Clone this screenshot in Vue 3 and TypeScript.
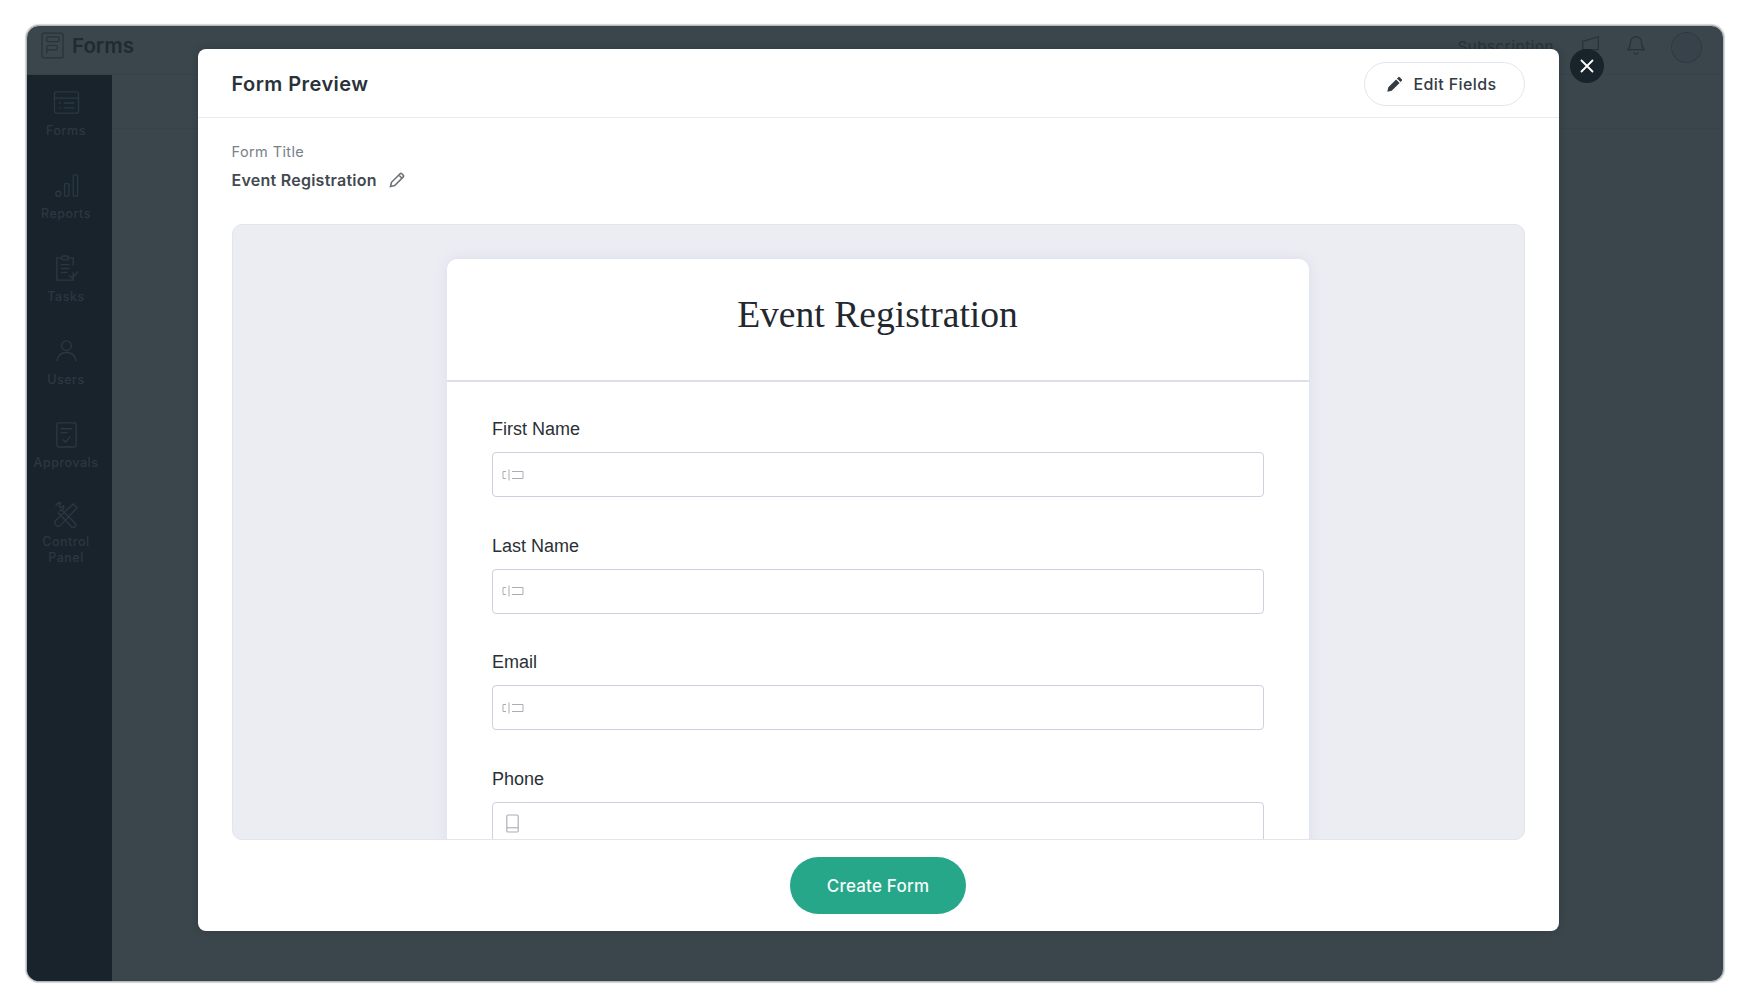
<script setup lang="ts">
interface NavItem { label: string; icon: string }
const nav: NavItem[] = [
  { label: 'Forms', icon: 'forms' },
  { label: 'Reports', icon: 'reports' },
  { label: 'Tasks', icon: 'tasks' },
  { label: 'Users', icon: 'users' },
  { label: 'Approvals', icon: 'approvals' },
  { label: 'Control Panel', icon: 'control' }
]
const fields = [
  { label: 'First Name', icon: 'text' },
  { label: 'Last Name', icon: 'text' },
  { label: 'Email', icon: 'text' },
  { label: 'Phone', icon: 'phone' }
]
</script>

<template>
  <div class="page">
    <div class="frame">
      <header class="topbar">
        <div class="brand">
          <svg class="logo" viewBox="0 0 24 28" fill="none" stroke="currentColor" stroke-width="1.3">
            <rect x="1" y="1" width="22" height="26" rx="2" />
            <rect x="6" y="5" width="13" height="5" rx="1.5" />
            <path d="M6 22v-6.500a1.500 1.500 0 0 1 1.500-1.500H15a1.500 1.500 0 0 1 0 4.500H6" />
          </svg>
          <span class="brand-name">Forms</span>
        </div>
        <div class="top-right">
          <span class="sub">Subscription</span>
          <svg class="top-icon" viewBox="0 0 24 24" fill="none" stroke="currentColor" stroke-width="1.4">
            <path d="M3 8l17-5v14H3z" />
          </svg>
          <svg class="top-icon bell" viewBox="0 0 24 24" fill="none" stroke="currentColor" stroke-width="1.4">
            <path d="M12 3a6 6 0 0 0-6 6c0 5-2 7-3 8h18c-1-1-3-3-3-8a6 6 0 0 0-6-6zM10 20a2 2 0 0 0 4 0" />
          </svg>
          <span class="avatar"></span>
        </div>
      </header>
      <div class="shell">
        <aside class="sidebar">
          <div v-for="item in nav" :key="item.label" class="nav-item">
            <svg class="nav-icon" viewBox="0 0 28 28" fill="none" stroke="currentColor" stroke-width="1.4">
              <g v-if="item.icon === 'forms'">
                <rect x="1.500" y="3" width="25" height="22" rx="2" />
                <path d="M1.500 9.500h25M6 14.500h2M11 14.500h11M6 19.500h2M11 19.500h11" />
              </g>
              <g v-else-if="item.icon === 'reports'">
                <rect x="3" y="20" width="5" height="5" rx="2" />
                <rect x="12" y="12" width="4.500" height="13" rx="1" />
                <rect x="21" y="3" width="4.500" height="22" rx="1" />
              </g>
              <g v-else-if="item.icon === 'tasks'">
                <path d="M9 3H4v23h17v-8M16 3h5v8" />
                <rect x="9" y="1" width="7" height="4" rx="2" />
                <path d="M8 10h9M8 14h9M8 18h7M17 21l3 3 6-7" />
              </g>
              <g v-else-if="item.icon === 'users'">
                <circle cx="14" cy="8" r="5" />
                <path d="M4 24c1-6 5-9 10-9s9 3 10 9" />
              </g>
              <g v-else-if="item.icon === 'approvals'">
                <rect x="4" y="2" width="20" height="25" rx="1.500" />
                <path d="M8 8h12M8 12h7M10 19l3 3 5-6" />
              </g>
              <g v-else>
                <path d="M8 8l15 15a2.500 2.500 0 0 1-4 3.500L5 12" />
                <path d="M21 3l4 4L8 25a3.500 3.500 0 0 1-5-5z" />
                <path d="M3 5a4 4 0 0 1 5-3L6 5l2 2 3-2a4 4 0 0 1-5 5" />
              </g>
            </svg>
            <span class="nav-label">{{ item.label }}</span>
          </div>
        </aside>
        <main class="content">
          <div class="toolbar"></div>
        </main>
      </div>

      <section class="modal">
        <div class="modal-head">
          <h2 class="modal-title">Form Preview</h2>
          <button class="edit-btn" type="button">
            <svg class="pencil-solid" viewBox="0 0 16 16" fill="currentColor">
              <path d="M11.300 1.200a1 1 0 0 1 1.400 0l2.100 2.100a1 1 0 0 1 0 1.400l-1.300 1.300-3.500-3.500zM9.100 3.400l3.500 3.500-7.900 7.900-4.400 1 1-4.500z" />
            </svg>
            <span>Edit Fields</span>
          </button>
        </div>
        <div class="title-block">
          <div class="title-label">Form Title</div>
          <div class="title-value">
            <span>Event Registration</span>
            <svg class="pencil-line" viewBox="0 0 16 16" fill="none" stroke="currentColor" stroke-width="1.600">
              <path d="M1.500 14.500l1-4.200 8.600-8.600a1.200 1.200 0 0 1 1.700 0l1.500 1.500a1.200 1.200 0 0 1 0 1.700l-8.600 8.600zM9.800 3l3.200 3.200" />
            </svg>
          </div>
        </div>
        <div class="canvas">
          <div class="card">
            <div class="card-head">Event Registration</div>
            <div class="card-body">
              <div v-for="f in fields" :key="f.label" class="field">
                <div class="field-label">{{ f.label }}</div>
                <div class="input">
                  <svg v-if="f.icon === 'text'" class="input-icon" viewBox="0 0 22 12" fill="none" stroke="currentColor" stroke-width="1">
                    <path d="M4 2.500H1v7h3M7 .5v11M10 2.500h11v7H10" />
                  </svg>
                  <svg v-else class="input-icon phone" viewBox="0 0 14 20" fill="none" stroke="currentColor" stroke-width="1.200">
                    <rect x="1" y="1" width="12" height="18" rx="1.500" />
                    <path d="M1 14.500h12" />
                  </svg>
                </div>
              </div>
            </div>
          </div>
        </div>
        <div class="modal-foot">
          <button class="create-btn" type="button">Create Form</button>
        </div>
      </section>

      <button class="close-btn" type="button" aria-label="Close">
        <svg viewBox="0 0 14 14" fill="none" stroke="#fff" stroke-width="1.800" stroke-linecap="round">
          <path d="M1.500 1.500l11 11M12.500 1.500l-11 11" />
        </svg>
      </button>
    </div>
  </div>
</template>

<style>
html, body { margin: 0; background: #fff; }
</style>

<style scoped>
.page {
  width: 1750px;
  height: 1008px;
  box-sizing: border-box;
  padding: 25px 26px 26px;
  background: #fff;
  font-family: Inter, "Liberation Sans", sans-serif;
  overflow: hidden;
}
.frame {
  position: relative;
  height: 100%;
  box-sizing: border-box;
  border: 1px solid #b4b8bb;
  border-radius: 13px;
  background: #3b454c;
  box-shadow: 0 0 1px 1px #d2d4d6;
  overflow: hidden;
  display: flex;
  flex-direction: column;
}
.topbar {
  height: 48px;
  flex: none;
  display: flex;
  align-items: center;
  justify-content: space-between;
  padding: 0 21px 0 14px;
  border-bottom: 1px solid #37414a;
  color: #1f2a32;
}
.brand { display: flex; align-items: center; gap: 8px; margin-top: -9px; }
.logo { width: 23px; height: 27px; color: #27323a; }
.brand-name { font-size: 20.500px; font-weight: 600; color: #1f2a32; }
.top-right { display: flex; align-items: center; color: #27323a; }
.sub { font-size: 15px; margin-right: 26px; margin-top: -8px; letter-spacing: 0.6px; }
.top-icon { width: 22px; height: 22px; margin-right: 23px; margin-top: -11px; }
.bell { margin-right: 24px; }
.avatar {
  width: 29px;
  height: 29px;
  border-radius: 50%;
  border: 1px dotted #27323a;
  background: #37424a;
  margin-top: -6px;
}
.shell { flex: 1; display: flex; min-height: 0; }
.sidebar {
  width: 85px;
  flex: none;
  background: #18232b;
  display: flex;
  flex-direction: column;
  padding-right: 7px;
  box-sizing: border-box;
}
.nav-item {
  height: 83px;
  flex: none;
  box-sizing: border-box;
  padding-top: 14px;
  display: flex;
  flex-direction: column;
  align-items: center;
  color: #2b3843;
}
.nav-item:last-child { padding-top: 11px; }
.nav-icon { width: 27px; height: 27px; flex: none; }
.nav-label {
  margin-top: 7px;
  width: 70px;
  font-size: 12.500px;
  line-height: 16px;
  font-weight: 500;
  letter-spacing: 0.5px;
  text-align: center;
}
.nav-item:last-child .nav-label { margin-top: 6px; }
.content { flex: 1; min-width: 0; }
.toolbar { height: 53px; border-bottom: 1px solid #384249; }

.modal {
  position: absolute;
  left: 171px;
  top: 23px;
  width: 1361px;
  height: 882px;
  background: #fff;
  border-radius: 8px;
  display: flex;
  flex-direction: column;
  box-shadow: 0 0 6px rgba(20, 30, 38, 0.25);
}
.modal-head {
  height: 69px;
  flex: none;
  box-sizing: border-box;
  padding: 2px 34px 0 33.500px;
  display: flex;
  align-items: center;
  justify-content: space-between;
  border-bottom: 1px solid #e9eaf1;
}
.modal-title {
  margin: 0;
  font-size: 20px;
  font-weight: 600;
  letter-spacing: 0.45px;
  color: #2a3239;
}
.edit-btn {
  width: 161px;
  height: 44px;
  box-sizing: border-box;
  border: 1px solid #e5e6ef;
  border-radius: 22px;
  background: #fff;
  display: flex;
  align-items: center;
  justify-content: center;
  gap: 10px;
  font-family: inherit;
  font-size: 16px;
  font-weight: 500;
  letter-spacing: 0.4px;
  color: #343b43;
  padding: 0 5px 0 0;
}
.pencil-solid { width: 16px; height: 16px; }
.title-block { padding: 24px 33.500px 0; flex: none; height: 106px; box-sizing: border-box; }
.title-label { font-size: 14.500px; line-height: 20px; color: #7a8087; letter-spacing: 0.4px; }
.title-value {
  margin-top: 8px;
  display: flex;
  align-items: center;
  gap: 12px;
  font-size: 16px;
  line-height: 20px;
  font-weight: 600;
  letter-spacing: 0.25px;
  color: #424950;
}
.pencil-line { width: 16px; height: 16px; color: #6d7379; }
.canvas {
  flex: 1;
  min-height: 0;
  margin: 0 34px;
  background: #ecedf3;
  border: 1px solid #e3e4ec;
  border-radius: 10px;
  overflow: hidden;
  display: flex;
  justify-content: center;
  padding-top: 34px;
}
.card {
  width: 862px;
  height: 900px;
  flex: none;
  margin-right: 2px;
  background: #fff;
  border-radius: 10px 10px 0 0;
  box-shadow: 0 0 12px rgba(190, 196, 225, 0.4);
}
.card-head {
  height: 123px;
  box-sizing: border-box;
  padding-bottom: 11px;
  border-bottom: 2px solid #dcdfe8;
  display: flex;
  align-items: center;
  justify-content: center;
  font-family: "Liberation Serif", serif;
  font-size: 37.600px;
  color: #22282e;
}
.card-body { padding: 35px 45px 0 45.500px; }
.field { margin-bottom: 36.600px; }
.field-label {
  font-family: "Liberation Sans", sans-serif;
  font-size: 18px;
  line-height: 24px;
  color: #2a3036;
  margin-bottom: 11px;
}
.input {
  height: 45px;
  box-sizing: border-box;
  border: 1.500px solid #cdd0dd;
  border-radius: 4px;
  background: #fff;
  display: flex;
  align-items: center;
  padding-left: 9px;
}
.input-icon { width: 22px; height: 12px; color: #a9adb4; }
.input-icon.phone { width: 15px; height: 19px; margin-left: 3px; margin-top: -1px; }
.modal-foot {
  height: 91px;
  flex: none;
  display: flex;
  align-items: center;
  justify-content: center;
}
.create-btn {
  width: 176px;
  height: 57px;
  border: 0;
  border-radius: 29px;
  background: #27a78a;
  color: #f5fbf9;
  font-family: inherit;
  font-size: 17px;
  font-weight: 500;
  letter-spacing: 0.2px;
  padding: 0;
  margin-right: 1px;
}
.close-btn {
  position: absolute;
  left: 1543px;
  top: 23px;
  width: 34px;
  height: 34px;
  border: 0;
  border-radius: 50%;
  background: #18232b;
  display: flex;
  align-items: center;
  justify-content: center;
  padding: 0;
}
.close-btn svg { width: 14px; height: 14px; }
</style>
